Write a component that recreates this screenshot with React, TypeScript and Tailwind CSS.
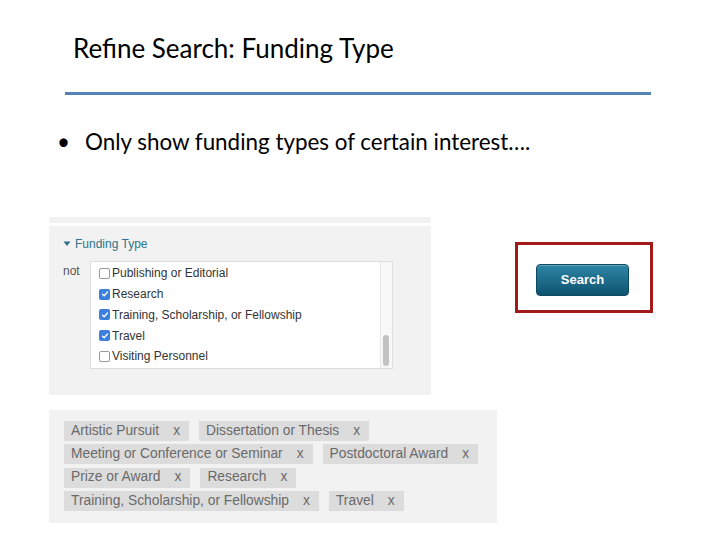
import React from "react";

const items = [
  { label: "Publishing or Editorial", checked: false },
  { label: "Research", checked: true },
  { label: "Training, Scholarship, or Fellowship", checked: true },
  { label: "Travel", checked: true },
  { label: "Visiting Personnel", checked: false },
];

const tagRows = [
  ["Artistic Pursuit", "Dissertation or Thesis"],
  ["Meeting or Conference or Seminar", "Postdoctoral Award"],
  ["Prize or Award", "Research"],
  ["Training, Scholarship, or Fellowship", "Travel"],
];

function Check({ checked }: { checked: boolean }) {
  if (checked) {
    return (
      <span className="flex h-[11px] w-[11px] items-center justify-center rounded-[2px] bg-[#3d7fdc]">
        <svg width="8" height="8" viewBox="0 0 8 8">
          <path d="M1.5 4.2 L3.2 5.8 L6.5 2" fill="none" stroke="white" strokeWidth="1.3" strokeLinecap="round" strokeLinejoin="round" />
        </svg>
      </span>
    );
  }
  return <span className="h-[11px] w-[11px] rounded-[2px] border border-[#9a9a9a] bg-white" />;
}

function Tag({ text }: { text: string }) {
  return (
    <div className="flex h-[20px] items-center bg-[#dcdcdc] pl-[7px] pr-[9px] text-[13.8px] text-[#6a6a6a]">
      <span>{text}</span>
      <span className="ml-[14px]">x</span>
    </div>
  );
}

export default function App() {
  return (
    <div
      className="relative h-[540px] w-[720px] overflow-hidden bg-white"
      style={{ fontFamily: "'Liberation Sans', Arial, sans-serif" }}
    >
      <div className="pl-[73px] pt-[33px] text-[26px] leading-[30px] text-black" style={{ fontFamily: "Lato, 'Open Sans', sans-serif" }}>
        Refine Search: Funding Type
      </div>
      <div className="ml-[65px] mt-[29px] h-[3px] w-[586px] bg-[#5583b8]" />
      <div className="ml-[57px] mt-[34px] flex text-[22.4px] leading-[26px] text-black" style={{ fontFamily: "Lato, 'Open Sans', sans-serif" }}>
        <span className="w-[28px]">•</span>
        <span>Only show funding types of certain interest….</span>
      </div>

      <div className="mt-[62px] flex pl-[49px]">
        <div className="flex flex-col">
          <div className="h-[6px] w-[382px] bg-[#f2f2f2]" />
          <div className="mt-[3px] h-[169px] w-[382px] bg-[#f2f2f2] pl-[14px] pt-[11px]">
            <div className="flex items-center text-[12px] leading-[14px] text-[#2f7289]">
              <svg width="8" height="6" viewBox="0 0 8 6" className="mr-[4px]">
                <path d="M0.5 0.5 L7.5 0.5 L4 5 Z" fill="#2f6f86" />
              </svg>
              <span>Funding Type</span>
            </div>
            <div className="mt-[10px] flex">
              <span className="w-[27px] text-[12px] leading-[14px] text-[#555] pt-[3px]">not</span>
              <div className="flex h-[108px] w-[303px] border border-[#dedede] bg-white">
                <div className="flex-1 pl-[8px] pt-[1px]">
                  {items.map((it) => (
                    <div key={it.label} className="flex h-[20.75px] items-center">
                      <Check checked={it.checked} />
                      <span className="ml-[2px] text-[12px] leading-[14px] text-[#333]">{it.label}</span>
                    </div>
                  ))}
                </div>
                <div className="relative w-[12px] border-l border-[#e8e8e8] bg-[#f8f8f8]">
                  <div className="absolute left-[2px] top-[73px] h-[31px] w-[6px] rounded-full bg-[#c2c2c2]" />
                </div>
              </div>
            </div>
          </div>

          <div className="mt-[15px] flex h-[113px] w-[448px] flex-col gap-[3.3px] bg-[#f2f2f2] pl-[15px] pt-[11px]">
            {tagRows.map((row, i) => (
              <div key={i} className="flex gap-[10px]">
                {row.map((t) => (
                  <Tag key={t} text={t} />
                ))}
              </div>
            ))}
          </div>
        </div>

        <div className="ml-[18px] mt-[25px] h-[71px] w-[138px] border-[3px] border-[#a31a1a] pl-[18px] pt-[19px]">
          <div className="flex h-[32px] w-[93px] items-center justify-center rounded-[4px] border border-[#0b4a60] bg-gradient-to-b from-[#2e86a6] to-[#0d5470] text-[13px] font-bold text-white shadow-[inset_0_1px_0_rgba(255,255,255,0.25)]">
            Search
          </div>
        </div>
      </div>
    </div>
  );
}
